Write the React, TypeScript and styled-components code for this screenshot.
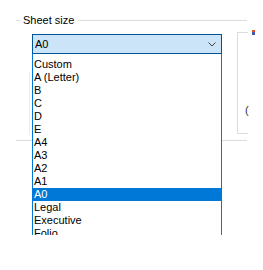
import React from 'react'
import styled, { createGlobalStyle } from 'styled-components'

const GlobalStyle = createGlobalStyle`
  html, body {
    margin: 0;
    padding: 0;
    background: #fff;
  }
  body {
    font-family: "Liberation Sans", Arial, sans-serif;
    font-size: 11px;
    color: #000;
  }
`

const Page = styled.div`
  width: 263px;
  height: 270px;
  padding: 14px 0 0 16px;
  box-sizing: border-box;
`

const Group = styled.fieldset`
  width: 231px;
  min-width: 0;
  margin: 0;
  padding: 0;
  border: none;
  border-top: 1px solid #dcdcdc;
  border-bottom: 1px solid #dcdcdc;
`

const Legend = styled.legend`
  margin-left: 4px;
  padding: 0 4px 0 3px;
  line-height: 13px;
  font-size: 11px;
`

const Body = styled.div`
  display: flex;
  height: 113px;
`

const LeftColumn = styled.div`
  display: flex;
  flex-direction: column;
  padding: 7px 0 0 16px;
  width: 190px;
  flex-shrink: 0;
`

const ComboWrap = styled.div`
  position: relative;
  z-index: 2;
`

const Combo = styled.div`
  display: flex;
  align-items: center;
  justify-content: space-between;
  height: 20px;
  box-sizing: border-box;
  padding: 0 5px 0 2px;
  border: 1px solid #005499;
  background: #cce4f7;
  line-height: 13px;
`

const DropList = styled.div`
  position: absolute;
  top: 100%;
  left: 0;
  width: 100%;
  height: 181px;
  box-sizing: border-box;
  padding-top: 4px;
  border-left: 1px solid #0078d7;
  border-right: 1px solid #0078d7;
  background: #fff;
  overflow: hidden;
`

const Item = styled.div<{ $selected?: boolean }>`
  height: 13px;
  line-height: 13px;
  padding-left: 1px;
  white-space: nowrap;
  background: ${(p) => (p.$selected ? '#0078d7' : 'transparent')};
  color: ${(p) => (p.$selected ? '#fff' : '#000')};
`

const Preview = styled.div`
  margin: 18px 0 0 -3px;
  height: 63px;
  border-left: 1px solid #ececec;
`

const SideGroup = styled.fieldset`
  margin: 3px 0 6px 15px;
  padding: 0 0 16px 7px;
  min-width: 0;
  width: 11px;
  box-sizing: border-box;
  flex-shrink: 0;
  border: 1px solid #dcdcdc;
  border-right: none;
  display: flex;
  flex-direction: column;
  justify-content: flex-end;
`

const SideLegend = styled.legend`
  margin-left: 5px;
  padding: 0 2px;
  line-height: 0;
`

const SideText = styled.div`
  line-height: 13px;
  color: #333;
`

const sizes = [
  'Custom', 'A (Letter)', 'B', 'C', 'D', 'E', 'A4', 'A3', 'A2', 'A1', 'A0',
  'Legal', 'Executive', 'Folio',
]

export default function App() {
  const selected = 'A0'
  return (
    <>
      <GlobalStyle />
      <Page>
        <Group>
          <Legend>Sheet size</Legend>
          <Body>
            <LeftColumn>
              <ComboWrap>
                <Combo>
                  <span>{selected}</span>
                  <svg width="8" height="5" viewBox="0 0 8 5">
                    <polyline points="0.5,0.5 4,4 7.5,0.5" fill="none" stroke="#404040" strokeWidth="1" />
                  </svg>
                </Combo>
                <DropList>
                  {sizes.map((s) => (
                    <Item key={s} $selected={s === selected}>{s}</Item>
                  ))}
                </DropList>
              </ComboWrap>
              <Preview />
            </LeftColumn>
            <SideGroup>
              <SideLegend>
                <svg width="3" height="5" viewBox="0 0 3 5">
                  <rect x="0" y="0" width="3" height="2" fill="#d9541e" />
                  <rect x="0" y="2" width="3" height="3" fill="#3b5bb5" />
                </svg>
              </SideLegend>
              <SideText>(</SideText>
            </SideGroup>
          </Body>
        </Group>
      </Page>
    </>
  )
}
